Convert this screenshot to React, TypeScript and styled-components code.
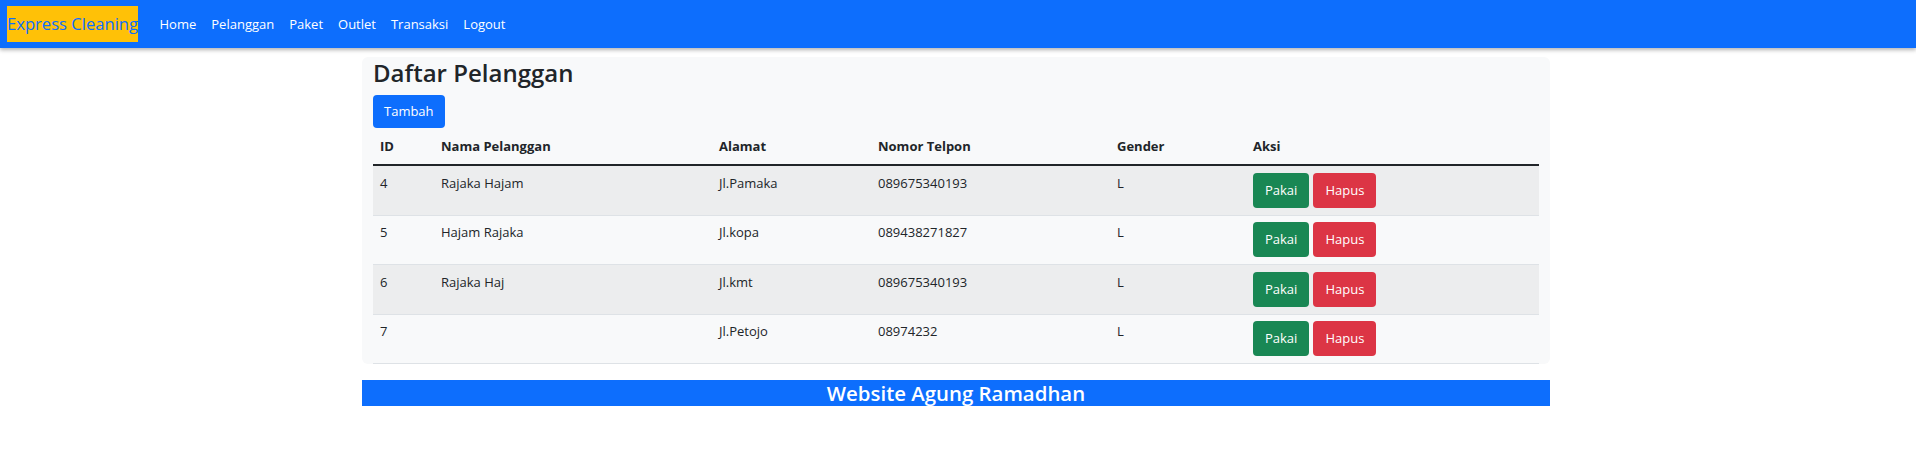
import styled, { createGlobalStyle } from "styled-components";

const GlobalStyle = createGlobalStyle`
  html, body {
    margin: 0;
    padding: 0;
    background: #ffffff;
  }

  body {
    font-family: "Open Sans", "Noto Sans", "Liberation Sans", sans-serif;
    font-size: 13px;
    color: #212529;
  }
`;

const Navbar = styled.nav`
  height: 48px;
  background: #0d6efd;
  box-shadow: 0 2px 4px rgba(0, 0, 0, 0.3);
  display: flex;
  align-items: center;
  padding: 0 7px;
  position: relative;
  z-index: 1;
`;

const Brand = styled.a`
  display: block;
  height: 36px;
  line-height: 36px;
  background: #ffc107;
  color: #0d6efd;
  font-size: 16.6px;
  text-decoration: none;
  margin-right: 14px;
  white-space: nowrap;
`;

const NavList = styled.ul`
  list-style: none;
  margin: 0;
  padding: 0;
  display: flex;
`;

const NavLink = styled.a`
  display: block;
  padding: 0 7.5px;
  color: #ffffff;
  font-size: 13px;
  line-height: 21px;
  text-decoration: none;
`;

const Main = styled.main`
  width: 1188px;
  box-sizing: border-box;
  margin: 9px 0 0 362px;
  padding: 1px 11px 0;
  background: #f8f9fa;
  border-radius: 6px;
`;

const Title = styled.h3`
  margin: 0 0 8px;
  font-size: 24px;
  font-weight: 600;
  line-height: 29px;
  color: #212529;
`;

const Button = styled.button<{ $variant: "primary" | "success" | "danger" }>`
  display: inline-flex;
  align-items: center;
  justify-content: center;
  box-sizing: border-box;
  height: ${({ $variant }) => ($variant === "primary" ? "33px" : "35px")};
  padding: 0 ${({ $variant }) => ($variant === "primary" ? "10px" : "11px")};
  border: 1px solid transparent;
  border-radius: 4px;
  font-family: inherit;
  font-size: 13px;
  line-height: 21px;
  color: #ffffff;
  cursor: pointer;
  background: ${({ $variant }) =>
    $variant === "primary"
      ? "#0d6efd"
      : $variant === "success"
      ? "#198754"
      : "#dc3545"};
`;

const Table = styled.table`
  width: 100%;
  margin-top: 1px;
  border-collapse: separate;
  border-spacing: 0;
  table-layout: fixed;
`;

const Th = styled.th<{ $w: number }>`
  box-sizing: border-box;
  width: ${({ $w }) => $w}px;
  padding: 7px;
  text-align: left;
  font-weight: 700;
  line-height: 21px;
  border-bottom: 2px solid #212529;
`;

const Row = styled.tr<{ $striped: boolean }>`
  background: ${({ $striped }) => ($striped ? "#ecedee" : "transparent")};
`;

const Td = styled.td`
  padding: 6.75px 7px;
  vertical-align: top;
  line-height: 21px;
  border-bottom: 1px solid #dee2e6;
`;

const Actions = styled.div`
  display: flex;
  gap: 4px;
`;

const Footer = styled.footer`
  width: 1188px;
  margin: 16px 0 0 362px;
  background: #0d6efd;
  color: #ffffff;
  text-align: center;
  font-size: 20.4px;
  font-weight: 600;
  line-height: 26px;
`;

const links = ["Home", "Pelanggan", "Paket", "Outlet", "Transaksi", "Logout"];

const columns = [
  { label: "ID", width: 61 },
  { label: "Nama Pelanggan", width: 278 },
  { label: "Alamat", width: 159 },
  { label: "Nomor Telpon", width: 239 },
  { label: "Gender", width: 136 },
  { label: "Aksi", width: 293 },
];

const customers = [
  { id: 4, nama: "Rajaka Hajam", alamat: "Jl.Pamaka", telp: "089675340193", gender: "L" },
  { id: 5, nama: "Hajam Rajaka", alamat: "Jl.kopa", telp: "089438271827", gender: "L" },
  { id: 6, nama: "Rajaka Haj", alamat: "Jl.kmt", telp: "089675340193", gender: "L" },
  { id: 7, nama: "", alamat: "Jl.Petojo", telp: "08974232", gender: "L" },
];

export default function App() {
  return (
    <>
      <GlobalStyle />
      <Navbar>
        <Brand href="#">Express Cleaning</Brand>
        <NavList>
          {links.map((l) => (
            <li key={l}>
              <NavLink href="#">{l}</NavLink>
            </li>
          ))}
        </NavList>
      </Navbar>

      <Main>
        <Title>Daftar Pelanggan</Title>
        <Button $variant="primary">Tambah</Button>
        <Table>
          <thead>
            <tr>
              {columns.map((c) => (
                <Th key={c.label} $w={c.width}>
                  {c.label}
                </Th>
              ))}
            </tr>
          </thead>
          <tbody>
            {customers.map((c, i) => (
              <Row key={c.id} $striped={i % 2 === 0}>
                <Td>{c.id}</Td>
                <Td>{c.nama}</Td>
                <Td>{c.alamat}</Td>
                <Td>{c.telp}</Td>
                <Td>{c.gender}</Td>
                <Td>
                  <Actions>
                    <Button $variant="success">Pakai</Button>
                    <Button $variant="danger">Hapus</Button>
                  </Actions>
                </Td>
              </Row>
            ))}
          </tbody>
        </Table>
      </Main>

      <Footer>Website Agung Ramadhan</Footer>
    </>
  );
}
